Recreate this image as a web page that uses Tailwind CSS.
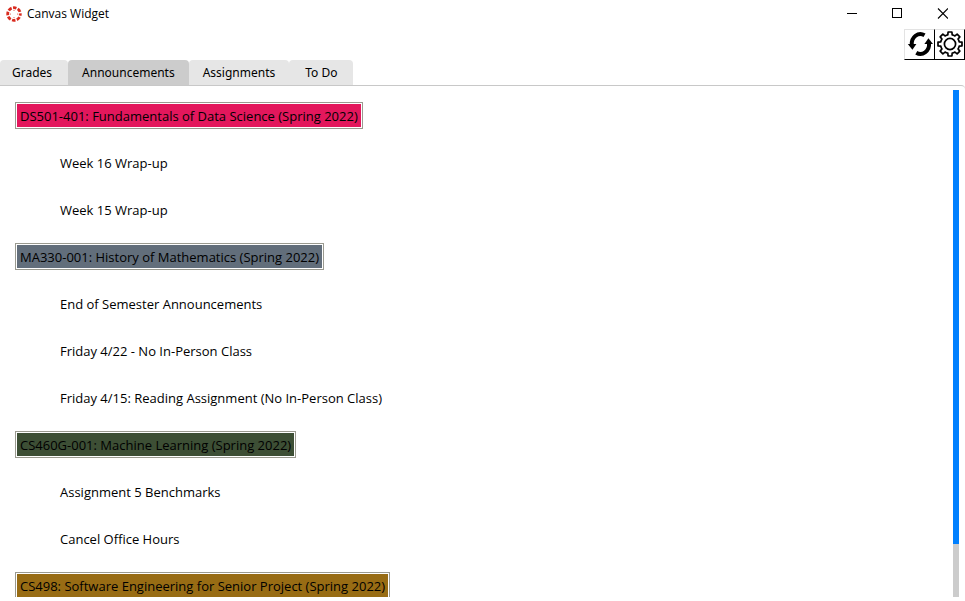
<!DOCTYPE html>
<html lang="en">
<head>
<meta charset="utf-8">
<meta name="viewport" content="width=device-width, initial-scale=1">
<title>Canvas Widget</title>
<script src="https://cdn.jsdelivr.net/npm/@tailwindcss/browser@4"></script>
</head>
<body class="h-screen overflow-hidden bg-white text-black text-[13px] leading-5 font-['Open_Sans','Noto_Sans',sans-serif] flex flex-col">
  <header class="flex h-7 shrink-0 items-center justify-between">
    <div class="flex items-center gap-[5px] pl-1.5">
      <svg class="size-4" viewBox="0 0 16 16" fill="#d92b1f" aria-hidden="true">
        <circle cx="8" cy="8" r="6.3" fill="none" stroke="#d92b1f" stroke-width="2.8" stroke-dasharray="3.5 1.448" stroke-dashoffset="1.75"/>
        <circle cx="8" cy="4.4" r=".5"/><circle cx="8" cy="11.6" r=".5"/><circle cx="4.4" cy="8" r=".5"/><circle cx="11.6" cy="8" r=".5"/>
      </svg>
      <h1 class="text-xs">Canvas Widget</h1>
    </div>
    <div class="flex h-full pr-px">
      <button type="button" aria-label="Minimize" class="flex w-[45px] items-center justify-center"><svg class="size-3" viewBox="0 0 12 12" fill="none" stroke="#000" shape-rendering="crispEdges"><path d="M1 5.5h10"/></svg></button>
      <button type="button" aria-label="Maximize" class="flex w-[45px] items-center justify-center"><svg class="size-3" viewBox="0 0 12 12" fill="none" stroke="#000" shape-rendering="crispEdges"><path d="M1.500 .5h9v9h-9z"/></svg></button>
      <button type="button" aria-label="Close" class="flex w-[45px] items-center justify-center"><svg class="size-3" viewBox="0 0 12 12" fill="none" stroke="#000" stroke-width="1.1"><path d="M2 .5l10 10M12 .5L2 10.500"/></svg></button>
    </div>
  </header>

  <div class="flex h-8 shrink-0 items-center justify-end" role="toolbar" aria-label="Actions">
    <button type="button" aria-label="Refresh" class="flex h-[31px] w-[31px] items-center justify-center border border-t-[#e3e3e3] border-l-[#e3e3e3] border-r-black border-b-black">
      <svg class="size-7" viewBox="0 0 28 28" fill="none" stroke="#000" stroke-width="4">
        <path d="M5.800 15A8.700 9.800 0 0 1 18.500 5.200"/>
        <path d="M23 13A8.700 9.800 0 0 1 10.300 22.800"/>
        <path d="M1.800 14H10.400L6.400 19.800z" fill="#000" stroke="none"/>
        <path d="M27 14H18.400L22.400 8.200z" fill="#000" stroke="none"/>
      </svg>
    </button>
    <button type="button" aria-label="Settings" class="flex h-[31px] w-[30px] items-center justify-center border-t border-r border-b border-t-[#e3e3e3] border-r-black border-b-black">
      <svg class="size-7" viewBox="-14 -14 28 28" fill="none" stroke="#000" stroke-width="1.7" stroke-linejoin="round">
        <circle r="5.600"/>
        <path d="M-2.200-9.200-1.900-12H1.900L2.200-9.200Q3.600-9 4.950-8.060L7.140-9.830 9.830-7.140 8.060-4.950Q9-3.600 9.200-2.200L12-1.900V1.900L9.200 2.200Q9 3.600 8.060 4.950L9.830 7.140 7.140 9.830 4.950 8.060Q3.600 9 2.200 9.200L1.900 12H-1.900L-2.200 9.200Q-3.600 9-4.950 8.060L-7.140 9.830-9.830 7.140-8.060 4.950Q-9 3.600-9.200 2.200L-12 1.900V-1.900L-9.200-2.200Q-9-3.600-8.060-4.950L-9.830-7.140-7.140-9.830-4.950-8.060Q-3.600-9-2.200-9.200Z"/>
      </svg>
    </button>
  </div>

  <nav class="flex shrink-0 text-xs font-['Noto_Sans','Open_Sans',sans-serif]" role="tablist" aria-label="Sections">
    <button type="button" role="tab" aria-selected="false" class="h-[25px] rounded-t-sm bg-[#e6e6e6] pl-3 pr-4">Grades</button>
    <button type="button" role="tab" aria-selected="true" class="h-[25px] rounded-t-sm bg-[#cccccc] px-3.5">Announcements</button>
    <button type="button" role="tab" aria-selected="false" class="h-[25px] rounded-t-sm bg-[#e6e6e6] px-3.5">Assignments</button>
    <button type="button" role="tab" aria-selected="false" class="h-[25px] rounded-t-sm bg-[#e6e6e6] px-4">To Do</button>
  </nav>

  <main class="flex min-h-0 grow rounded-tr-sm border-t border-[#c8c8c8] pt-1 pr-1.5 pb-1" role="tabpanel" aria-label="Announcements">
    <ul class="min-w-0 grow overflow-hidden pt-0.5 pl-[15px]">
      <li class="flex h-[47px] items-center"><button type="button" class="border border-[#9a9a90] bg-white p-px"><span class="block bg-[#e3175c] px-[3px] pt-0.5 leading-[21px]">DS501-401: Fundamentals of Data Science (Spring 2022)</span></button></li>
      <li class="flex h-[47px] items-center pl-[45px]"><a href="#">Week 16 Wrap-up</a></li>
      <li class="flex h-[47px] items-center pl-[45px]"><a href="#">Week 15 Wrap-up</a></li>
      <li class="flex h-[47px] items-center"><button type="button" class="border border-[#9a9a90] bg-white p-px"><span class="block bg-[#626e7b] px-[3px] pt-0.5 leading-[21px]">MA330-001: History of Mathematics (Spring 2022)</span></button></li>
      <li class="flex h-[47px] items-center pl-[45px]"><a href="#">End of Semester Announcements</a></li>
      <li class="flex h-[47px] items-center pl-[45px]"><a href="#">Friday 4/22 - No In-Person Class</a></li>
      <li class="flex h-[47px] items-center pl-[45px]"><a href="#">Friday 4/15: Reading Assignment (No In-Person Class)</a></li>
      <li class="flex h-[47px] items-center"><button type="button" class="border border-[#9a9a90] bg-white p-px"><span class="block bg-[#3d4f35] px-[3px] pt-0.5 leading-[21px]">CS460G-001: Machine Learning (Spring 2022)</span></button></li>
      <li class="flex h-[47px] items-center pl-[45px]"><a href="#">Assignment 5 Benchmarks</a></li>
      <li class="flex h-[47px] items-center pl-[45px]"><a href="#">Cancel Office Hours</a></li>
      <li class="flex h-[47px] items-center"><button type="button" class="border border-[#9a9a90] bg-white p-px"><span class="block bg-[#986c14] px-[3px] pt-0.5 leading-[21px]">CS498: Software Engineering for Senior Project (Spring 2022)</span></button></li>
    </ul>
    <div class="w-1.5 shrink-0 bg-[#cccccc]" aria-hidden="true"><div class="bg-[#0080ff]" style="height:89.5%"></div></div>
  </main>
</body>
</html>
